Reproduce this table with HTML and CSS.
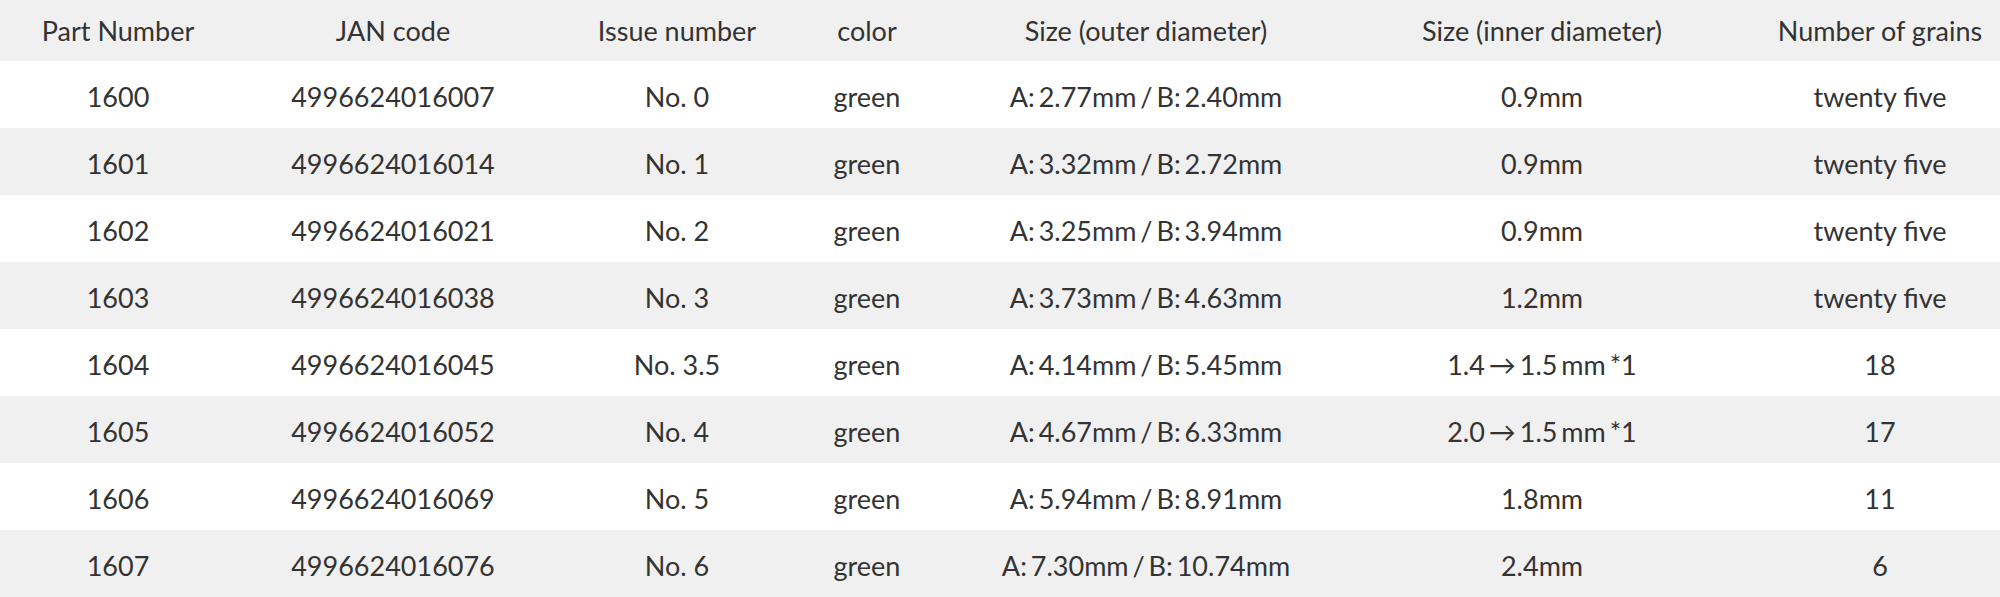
FILE: index.html
```html
<!DOCTYPE html>
<html lang="en">
<head>
<meta charset="utf-8">
<title>Parts table</title>
<link rel="stylesheet" href="styles.css">
</head>
<body>
<table class="spec">
  <colgroup>
    <col class="w1"><col class="w2"><col class="w3"><col class="w4"><col class="w5"><col class="w6"><col class="w7">
  </colgroup>
  <thead>
    <tr><th>Part Number</th><th>JAN code</th><th>Issue number</th><th>color</th><th>Size (outer diameter)</th><th>Size (inner diameter)</th><th>Number of grains</th></tr>
  </thead>
  <tbody>
    <tr><td>1600</td><td>4996624016007</td><td>No. 0</td><td>green</td><td class="size">A: 2.77mm / B: 2.40mm</td><td class="size">0.9mm</td><td>twenty five</td></tr>
    <tr><td>1601</td><td>4996624016014</td><td>No. 1</td><td>green</td><td class="size">A: 3.32mm / B: 2.72mm</td><td class="size">0.9mm</td><td>twenty five</td></tr>
    <tr><td>1602</td><td>4996624016021</td><td>No. 2</td><td>green</td><td class="size">A: 3.25mm / B: 3.94mm</td><td class="size">0.9mm</td><td>twenty five</td></tr>
    <tr><td>1603</td><td>4996624016038</td><td>No. 3</td><td>green</td><td class="size">A: 3.73mm / B: 4.63mm</td><td class="size">1.2mm</td><td>twenty five</td></tr>
    <tr><td>1604</td><td>4996624016045</td><td>No. 3.5</td><td>green</td><td class="size">A: 4.14mm / B: 5.45mm</td><td class="size">1.4 → 1.5 mm *1</td><td>18</td></tr>
    <tr><td>1605</td><td>4996624016052</td><td>No. 4</td><td>green</td><td class="size">A: 4.67mm / B: 6.33mm</td><td class="size">2.0 → 1.5 mm *1</td><td>17</td></tr>
    <tr><td>1606</td><td>4996624016069</td><td>No. 5</td><td>green</td><td class="size">A: 5.94mm / B: 8.91mm</td><td class="size">1.8mm</td><td>11</td></tr>
    <tr><td>1607</td><td>4996624016076</td><td>No. 6</td><td>green</td><td class="size">A: 7.30mm / B: 10.74mm</td><td class="size">2.4mm</td><td>6</td></tr>
  </tbody>
</table>
</body>
</html>
```
FILE: styles.css
```css
html, body {
  margin: 0;
  padding: 0;
  overflow: hidden;
  background: #ffffff;
}
.spec {
  width: 2038px;
  table-layout: fixed;
  border-collapse: collapse;
  font-family: Lato, "Liberation Sans", sans-serif;
  font-size: 27px;
  color: #333333;
}
.w1 { width: 236px; }
.w2 { width: 314px; }
.w3 { width: 254px; }
.w4 { width: 126px; }
.w5 { width: 432px; }
.w6 { width: 360px; }
.w7 { width: 316px; }
.spec th, .spec td {
  padding: 0;
  text-align: center;
  vertical-align: middle;
  white-space: nowrap;
  font-weight: 400;
}
.spec thead tr {
  height: 61px;
  background: #f0f0f0;
}
.spec tbody tr {
  height: 67px;
  background: #ffffff;
}
.spec tbody tr:nth-child(even) {
  background: #f0f0f0;
}
.spec td {
  padding-top: 4px;
}
.spec td.size {
  word-spacing: -3px;
}
```
